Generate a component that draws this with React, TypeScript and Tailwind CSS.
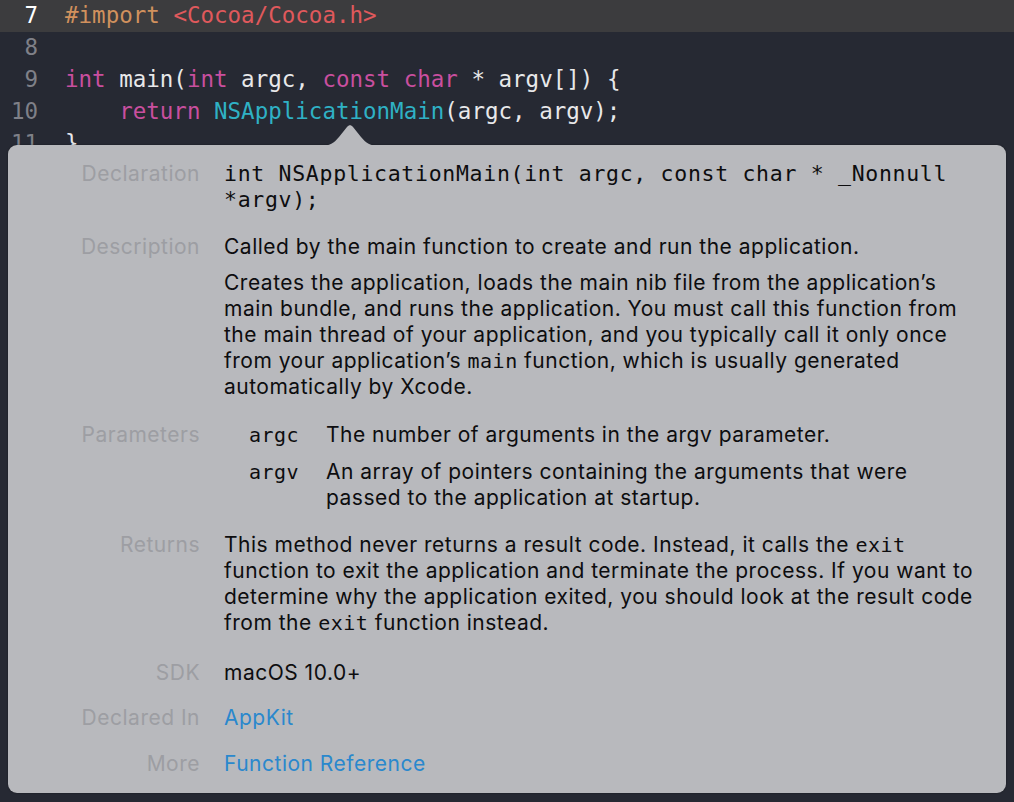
import React from "react";

const mono = { fontFamily: '"DejaVu Sans Mono", "Liberation Mono", monospace' };

const Kw = ({ children }: { children: React.ReactNode }) => <span className="text-[#c94f9f]">{children}</span>;

function CodeLine({ n, active, children }: { n: number; active?: boolean; children?: React.ReactNode }) {
  return (
    <div className={`flex h-[32px] items-center ${active ? "bg-[#3c3c3e]" : ""}`}>
      <div className={`w-[38px] shrink-0 text-right ${active ? "text-white" : "text-[#7f8088]"}`}>{n}</div>
      <div className="pl-[27px] whitespace-pre text-[#e8e8ea]">{children}</div>
    </div>
  );
}

function Row({ label, children, className = "" }: { label: string; children: React.ReactNode; className?: string }) {
  return (
    <div className={`flex ${className}`}>
      <div className="w-[192px] shrink-0 text-right text-[#9d9ea3]">{label}</div>
      <div className="pl-[24px] flex-1">{children}</div>
    </div>
  );
}

const Code = ({ children }: { children: React.ReactNode }) => (
  <span style={mono} className="text-[20px] tracking-[0.5px]">{children}</span>
);

export default function App() {
  return (
    <div className="relative w-[1014px] h-[802px] overflow-hidden bg-[#262933]" >
      <div style={mono} className="text-[22.5px] tracking-[0px]">
        <CodeLine n={7} active>
          <span className="text-[#d1915d]">#import</span> <span className="text-[#e0595c]">&lt;Cocoa/Cocoa.h&gt;</span>
        </CodeLine>
        <CodeLine n={8} />
        <CodeLine n={9}>
          <Kw>int</Kw> main(<Kw>int</Kw> argc, <Kw>const</Kw> <Kw>char</Kw> * argv[]) {"{"}
        </CodeLine>
        <CodeLine n={10}>
          {"    "}<Kw>return</Kw> <span className="text-[#2fb1c5]">NSApplicationMain</span>(argc, argv);
        </CodeLine>
        <CodeLine n={11}>{"}"}</CodeLine>
      </div>

      {/* popover */}
      <div
        className="absolute left-[8px] top-[145px] w-[998px] h-[648px] rounded-[9px] bg-[#b8b9bd] text-[#0d0d0f] shadow-[0_0_2px_rgba(0,0,0,0.4)]"
        style={{ fontFamily: 'Inter, "Noto Sans", sans-serif' }}
      >
        <svg className="absolute left-[312px] top-[-24px]" width="60" height="25" viewBox="0 0 60 25">
          <path d="M0 25 C 10 25, 14 22, 19 16 L 27 6 C 29 3.5, 31 3.5, 33 6 L 41 16 C 46 22, 50 25, 60 25 Z" fill="#b8b9bd" />
        </svg>
        <div className="pt-[16px] text-[21px] tracking-[0.5px] leading-[26px]">
          <Row label="Declaration">
            <div style={mono} className="text-[21.5px] tracking-[0.7px] leading-[26px] whitespace-pre">
              {"int NSApplicationMain(int argc, const char * _Nonnull\n*argv);"}
            </div>
          </Row>
          <Row label="Description" className="mt-[21px]">
            <div className="whitespace-nowrap">Called by the main function to create and run the application.</div>
            <div className="mt-[10px] whitespace-nowrap">
              Creates the application, loads the main nib file from the application’s<br />
              main bundle, and runs the application. You must call this function from<br />
              the main thread of your application, and you typically call it only once<br />
              from your application’s <Code>main</Code> function, which is usually generated<br />
              automatically by Xcode.
            </div>
          </Row>
          <Row label="Parameters" className="mt-[22px]">
            <div className="flex">
              <div className="w-[102px] shrink-0 pl-[25px]"><Code>argc</Code></div>
              <div className="whitespace-nowrap">The number of arguments in the argv parameter.</div>
            </div>
            <div className="flex mt-[11px]">
              <div className="w-[102px] shrink-0 pl-[25px]"><Code>argv</Code></div>
              <div className="whitespace-nowrap">
                An array of pointers containing the arguments that were<br />
                passed to the application at startup.
              </div>
            </div>
          </Row>
          <Row label="Returns" className="mt-[21px]">
            <div className="whitespace-nowrap">
              This method never returns a result code. Instead, it calls the <Code>exit</Code><br />
              function to exit the application and terminate the process. If you want to<br />
              determine why the application exited, you should look at the result code<br />
              from the <Code>exit</Code> function instead.
            </div>
          </Row>
          <Row label="SDK" className="mt-[24px]">
            <div>macOS 10.0+</div>
          </Row>
          <Row label="Declared In" className="mt-[19px]">
            <div className="text-[#2a88cd]">AppKit</div>
          </Row>
          <Row label="More" className="mt-[20px]">
            <div className="text-[#2a88cd]">Function Reference</div>
          </Row>
        </div>
      </div>
    </div>
  );
}
